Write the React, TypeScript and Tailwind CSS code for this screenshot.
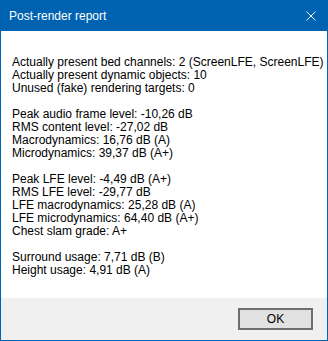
import React from "react";

const groups: string[][] = [
  [
    "Actually present bed channels: 2 (ScreenLFE, ScreenLFE)",
    "Actually present dynamic objects: 10",
    "Unused (fake) rendering targets: 0",
  ],
  [
    "Peak audio frame level: -10,26 dB",
    "RMS content level: -27,02 dB",
    "Macrodynamics: 16,76 dB (A)",
    "Microdynamics: 39,37 dB (A+)",
  ],
  [
    "Peak LFE level: -4,49 dB (A+)",
    "RMS LFE level: -29,77 dB",
    "LFE macrodynamics: 25,28 dB (A)",
    "LFE microdynamics: 64,40 dB (A+)",
    "Chest slam grade: A+",
  ],
  ["Surround usage: 7,71 dB (B)", "Height usage: 4,91 dB (A)"],
];

export default function App() {
  return (
    <div
      className="w-[328px] h-[341px] border border-[#0063b1] flex flex-col bg-white text-black"
      style={{ fontFamily: '"Segoe UI", "Liberation Sans", Arial, sans-serif' }}
    >
      <div className="h-[30px] shrink-0 bg-[#0063b1] flex items-center justify-between pl-[8px] pr-[10px]">
        <span className="text-white text-[12px]">Post-render report</span>
        <svg width="10" height="10" viewBox="0 0 10 10" className="mr-[1px]">
          <path d="M0.5 0.5 L9.5 9.5 M9.5 0.5 L0.5 9.5" stroke="white" strokeWidth="1" />
        </svg>
      </div>
      <div className="flex-1 bg-white pt-[25px] pl-[11px] flex flex-col gap-[13px]">
        {groups.map((g, i) => (
          <div key={i} className="flex flex-col">
            {g.map((l) => (
              <div key={l} className="text-[12px] leading-[13px] whitespace-nowrap">
                {l}
              </div>
            ))}
          </div>
        ))}
      </div>
      <div className="h-[42px] shrink-0 bg-[#f0f0f0] flex items-center justify-end pr-[14px]">
        <div className="w-[75px] h-[22px] border-2 border-[#6e6e6e] bg-[#e1e1e1] flex items-center justify-center text-[12px]">
          OK
        </div>
      </div>
    </div>
  );
}
